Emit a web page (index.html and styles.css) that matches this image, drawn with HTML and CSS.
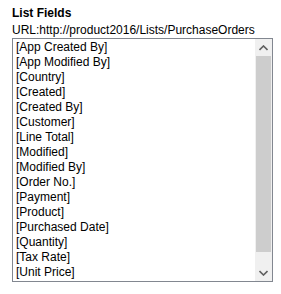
FILE: index.html
```
<!DOCTYPE html>
<html>
<head>
<meta charset="utf-8">
<link rel="stylesheet" href="styles.css">
</head>
<body>
<div class="panel">
  <div class="title">List Fields</div>
  <div class="url">URL:http://product2016/Lists/PurchaseOrders</div>
  <div class="listbox">
    <ul class="items">
      <li>[App Created By]</li>
      <li>[App Modified By]</li>
      <li>[Country]</li>
      <li>[Created]</li>
      <li>[Created By]</li>
      <li>[Customer]</li>
      <li>[Line Total]</li>
      <li>[Modified]</li>
      <li>[Modified By]</li>
      <li>[Order No.]</li>
      <li>[Payment]</li>
      <li>[Product]</li>
      <li>[Purchased Date]</li>
      <li>[Quantity]</li>
      <li>[Tax Rate]</li>
      <li>[Unit Price]</li>
    </ul>
    <div class="scrollbar">
      <div class="arrow">
        <svg width="9" height="6" viewBox="0 0 9 6"><path d="M0.5 5 L4.5 1 L8.5 5" fill="none" stroke="#606060" stroke-width="1.6"/></svg>
      </div>
      <div class="track"><div class="thumb"></div></div>
      <div class="arrow">
        <svg width="9" height="6" viewBox="0 0 9 6"><path d="M0.5 1 L4.5 5 L8.5 1" fill="none" stroke="#606060" stroke-width="1.6"/></svg>
      </div>
    </div>
  </div>
</div>
</body>
</html>
```
FILE: styles.css
```
html, body {
  margin: 0;
  padding: 0;
  background: #ffffff;
}
.panel {
  padding: 4px 8px 0 12px;
  font-family: "Liberation Sans", Arial, sans-serif;
  font-size: 12px;
  color: #000;
}
.title {
  font-weight: bold;
  line-height: 18px;
}
.url {
  line-height: 16px;
}
.listbox {
  display: flex;
  width: 261px;
  height: 244px;
  border: 1px solid #828790;
  box-sizing: border-box;
}
.items {
  flex: 1;
  margin: 0;
  padding: 1px 0 0 3px;
  list-style: none;
  line-height: 15px;
}
.scrollbar {
  width: 17px;
  display: flex;
  flex-direction: column;
  background: #f0f0f0;
}
.arrow {
  height: 17px;
  display: flex;
  align-items: center;
  justify-content: center;
}
.track {
  flex: 1;
  display: flex;
  flex-direction: column;
}
.thumb {
  margin: 0 1px;
  height: 196px;
  background: #cdcdcd;
}
```
